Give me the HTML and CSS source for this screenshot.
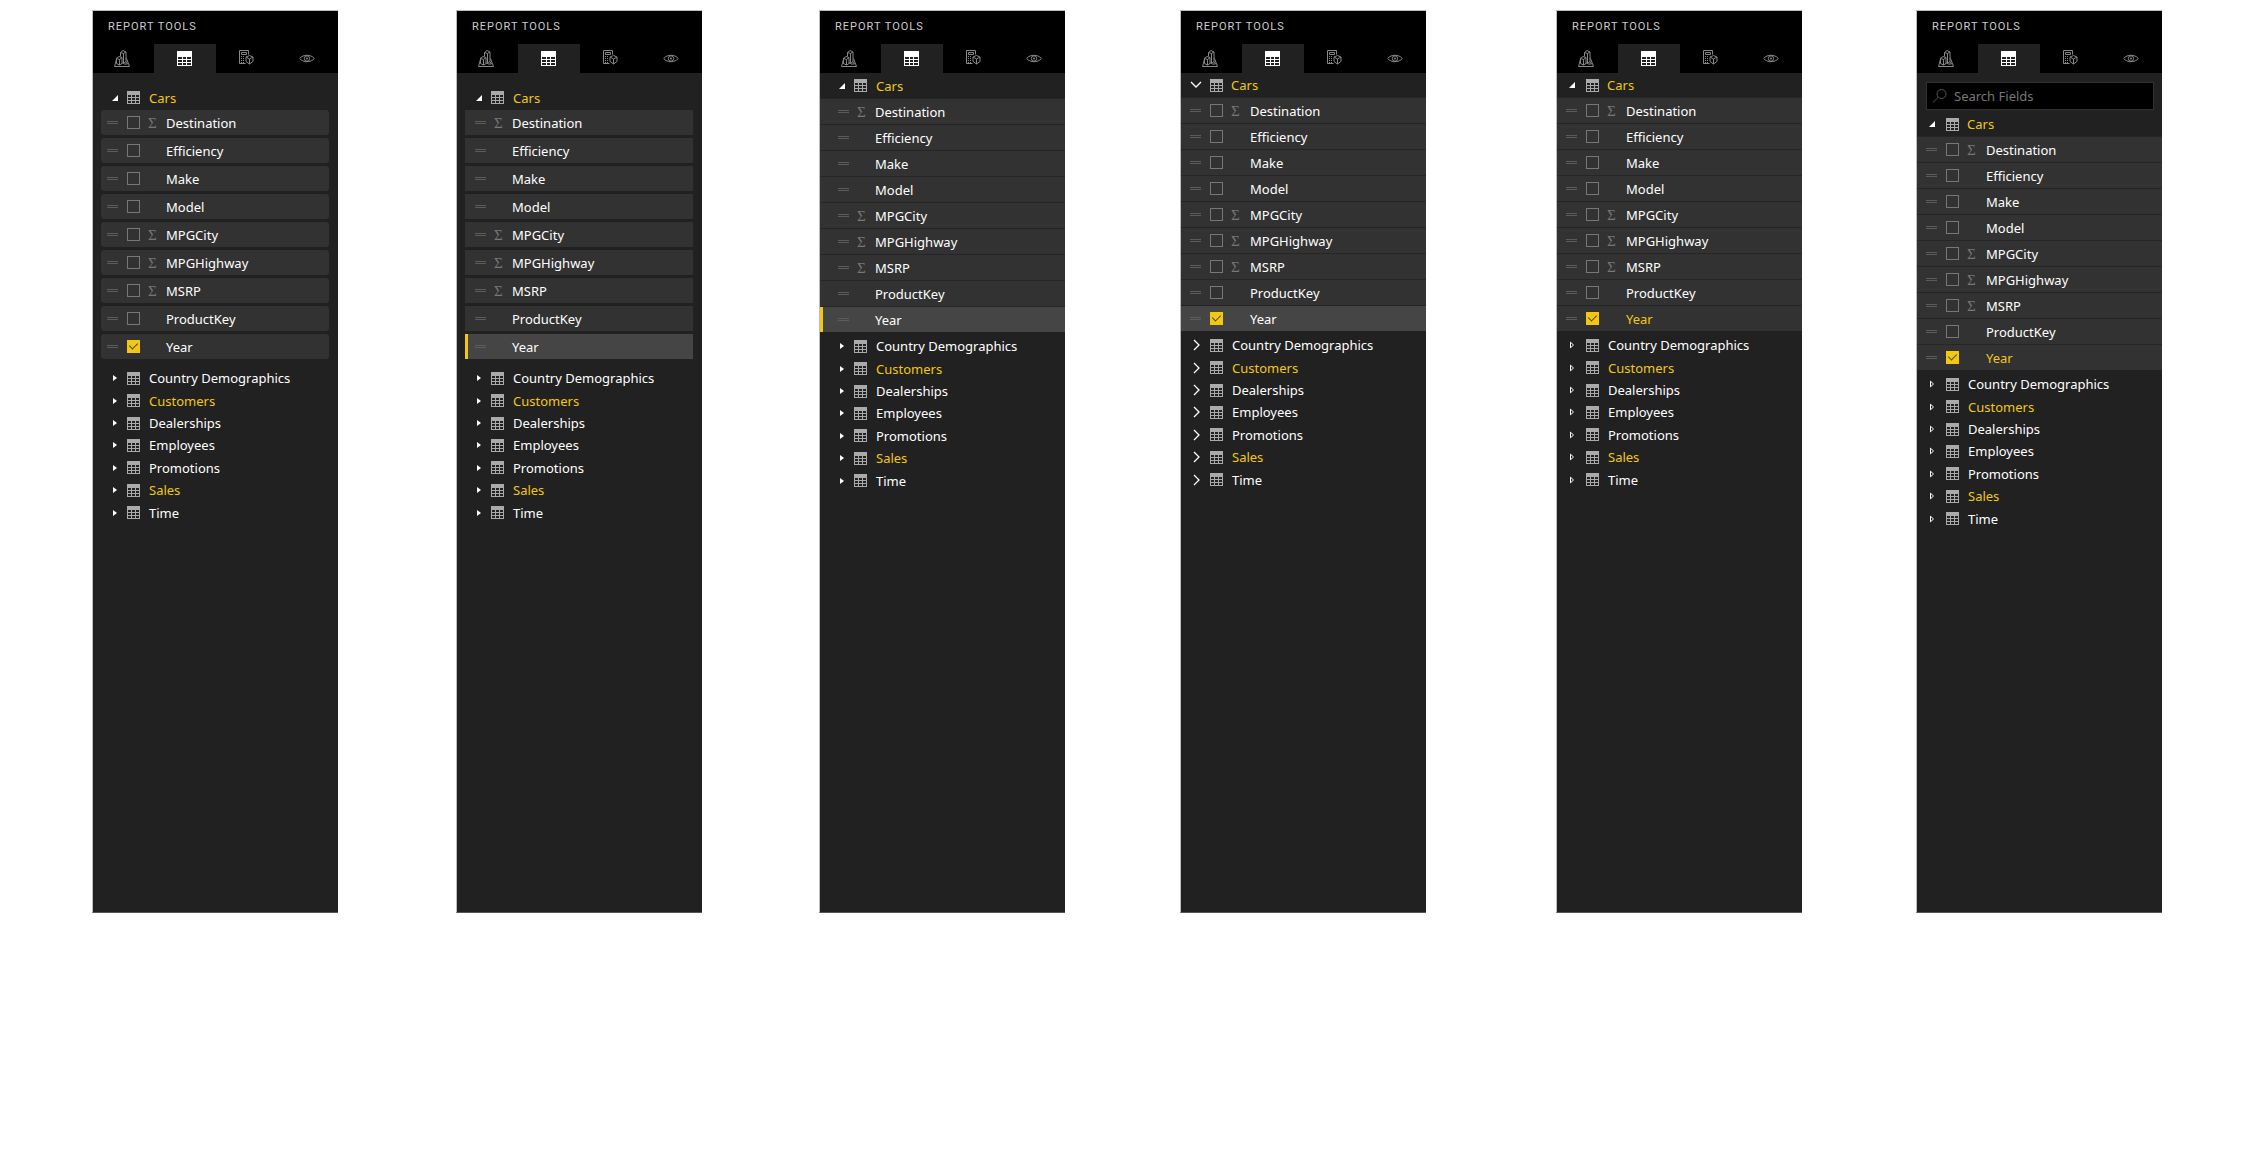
FILE: index.html
```html
<!DOCTYPE html>
<html lang="en">
<head>
<meta charset="utf-8">
<title>Report tools</title>
<link rel="stylesheet" href="styles.css">
</head>
<body>
<svg class="symbols" aria-hidden="true">
  <symbol id="grid" viewBox="0 0 13 13"><path fill="currentColor" fill-rule="evenodd" d="M0 0h13v13H0zM1 4h3v2H1zM5 4h3v2H5zM9 4h3v2H9zM1 7h3v2H1zM5 7h3v2H5zM9 7h3v2H9zM1 10h3v2H1zM5 10h3v2H5zM9 10h3v2H9z"/></symbol>
  <symbol id="fields" viewBox="0 0 15 15"><path fill="currentColor" fill-rule="evenodd" d="M0 0h15v15H0zM1 6h4v2H1zM6 6h3v2H6zM10 6h4v2h-4zM1 9h4v2H1zM6 9h3v2H6zM10 9h4v2h-4zM1 12h4v2H1zM6 12h3v2H6zM10 12h4v2h-4z"/></symbol>
  <symbol id="model" viewBox="0 0 16 17"><path fill="none" stroke="currentColor" d="M3 7.500.5 16.500h15L12.500 8.500M2.500 8.500 5 6.500l3 1v6l-2.500 1.500-3-1.500zM2.500 8.500l3 1 2.500-2M5.500 9.500V15M6.500 6.500V2.500L9 .500l3 1.500v9.500L9.500 13.500 8 13M6.500 2.500l3 1L12 2M9.500 3.500v10M12 11.500l1.500 2.500H10"/></symbol>
  <symbol id="calc" viewBox="0 0 15 15"><path fill="none" stroke="currentColor" d="M6.500 13.500h-6V.500h9v4M2.500 2.500h5v2h-5zM10.500 5.500l3.500 1.500v4.500l-3.500 2.500L7 11.500V7zM7 7l3.500 2L14 7M10.500 9v5"/><path fill="currentColor" d="M2 6h1v1H2zM4 6h1v1H4zM2 8h1v1H2zM4 8h1v1H4zM2 10h1v1H2zM4 10h1v1H4zM2 12h1v1H2zM4 12h1v1H4z"/></symbol>
  <symbol id="eye" viewBox="0 0 16 9"><path fill="none" stroke="currentColor" d="M.700 4.500C4 .200 12 .200 15.300 4.500 12 8.800 4 8.800.700 4.500z"/><circle cx="8" cy="4.500" r="2.700" fill="none" stroke="currentColor"/><circle cx="8" cy="4.500" r="1" fill="currentColor"/></symbol>
  <symbol id="open" viewBox="0 0 6 6"><path fill="currentColor" d="M6 0v6H0z"/></symbol>
  <symbol id="closed" viewBox="0 0 6 6"><path fill="currentColor" d="M1 0l4 3-4 3z"/></symbol>
  <symbol id="hollow" viewBox="0 0 6 8"><path fill="none" stroke="currentColor" d="M1.500 1.200 4.500 4l-3 2.800z"/></symbol>
  <symbol id="down" viewBox="0 0 12 8"><path fill="none" stroke="currentColor" stroke-width="1.300" d="M1 1l5 5 5-5"/></symbol>
  <symbol id="right" viewBox="0 0 8 12"><path fill="none" stroke="currentColor" stroke-width="1.300" d="M2 1l5 5-5 5"/></symbol>
  <symbol id="search" viewBox="0 0 16 16"><circle cx="9.500" cy="6" r="4.500" fill="none" stroke="currentColor"/><path stroke="currentColor" d="M6 9.500.800 14.500"/></symbol>
</svg>
<main class="board">

<section class="panel cards ticks">
  <header class="head"><h2 class="title">REPORT TOOLS</h2>
    <nav class="tabs"><button class="tab" aria-label="Model"><svg class="i-model"><use href="#model"/></svg></button><button class="tab active" aria-label="Fields"><svg class="i-fields"><use href="#fields"/></svg></button><button class="tab" aria-label="Calculations"><svg class="i-calc"><use href="#calc"/></svg></button><button class="tab" aria-label="View"><svg class="i-eye"><use href="#eye"/></svg></button></nav></header>
  <button class="table used top"><svg class="caret"><use href="#open"/></svg><svg class="icon"><use href="#grid"/></svg><span>Cars</span></button>
  <div class="fields">
    <label class="field"><input type="checkbox"><span class="sum">Σ</span><span class="name">Destination</span></label>
    <label class="field"><input type="checkbox"><span class="name">Efficiency</span></label>
    <label class="field"><input type="checkbox"><span class="name">Make</span></label>
    <label class="field"><input type="checkbox"><span class="name">Model</span></label>
    <label class="field"><input type="checkbox"><span class="sum">Σ</span><span class="name">MPGCity</span></label>
    <label class="field"><input type="checkbox"><span class="sum">Σ</span><span class="name">MPGHighway</span></label>
    <label class="field"><input type="checkbox"><span class="sum">Σ</span><span class="name">MSRP</span></label>
    <label class="field"><input type="checkbox"><span class="name">ProductKey</span></label>
    <label class="field"><input type="checkbox" checked><span class="name">Year</span></label>
  </div>
  <div class="tables">
    <button class="table"><svg class="caret"><use href="#closed"/></svg><svg class="icon"><use href="#grid"/></svg><span>Country Demographics</span></button>
    <button class="table used"><svg class="caret"><use href="#closed"/></svg><svg class="icon"><use href="#grid"/></svg><span>Customers</span></button>
    <button class="table"><svg class="caret"><use href="#closed"/></svg><svg class="icon"><use href="#grid"/></svg><span>Dealerships</span></button>
    <button class="table"><svg class="caret"><use href="#closed"/></svg><svg class="icon"><use href="#grid"/></svg><span>Employees</span></button>
    <button class="table"><svg class="caret"><use href="#closed"/></svg><svg class="icon"><use href="#grid"/></svg><span>Promotions</span></button>
    <button class="table used"><svg class="caret"><use href="#closed"/></svg><svg class="icon"><use href="#grid"/></svg><span>Sales</span></button>
    <button class="table"><svg class="caret"><use href="#closed"/></svg><svg class="icon"><use href="#grid"/></svg><span>Time</span></button>
  </div>
</section>

<section class="panel cards square">
  <header class="head"><h2 class="title">REPORT TOOLS</h2>
    <nav class="tabs"><button class="tab" aria-label="Model"><svg class="i-model"><use href="#model"/></svg></button><button class="tab active" aria-label="Fields"><svg class="i-fields"><use href="#fields"/></svg></button><button class="tab" aria-label="Calculations"><svg class="i-calc"><use href="#calc"/></svg></button><button class="tab" aria-label="View"><svg class="i-eye"><use href="#eye"/></svg></button></nav></header>
  <button class="table used top"><svg class="caret"><use href="#open"/></svg><svg class="icon"><use href="#grid"/></svg><span>Cars</span></button>
  <div class="fields">
    <button class="field"><span class="sum">Σ</span><span class="name">Destination</span></button>
    <button class="field"><span class="name">Efficiency</span></button>
    <button class="field"><span class="name">Make</span></button>
    <button class="field"><span class="name">Model</span></button>
    <button class="field"><span class="sum">Σ</span><span class="name">MPGCity</span></button>
    <button class="field"><span class="sum">Σ</span><span class="name">MPGHighway</span></button>
    <button class="field"><span class="sum">Σ</span><span class="name">MSRP</span></button>
    <button class="field"><span class="name">ProductKey</span></button>
    <button class="field lit marked"><span class="name">Year</span></button>
  </div>
  <div class="tables">
    <button class="table"><svg class="caret"><use href="#closed"/></svg><svg class="icon"><use href="#grid"/></svg><span>Country Demographics</span></button>
    <button class="table used"><svg class="caret"><use href="#closed"/></svg><svg class="icon"><use href="#grid"/></svg><span>Customers</span></button>
    <button class="table"><svg class="caret"><use href="#closed"/></svg><svg class="icon"><use href="#grid"/></svg><span>Dealerships</span></button>
    <button class="table"><svg class="caret"><use href="#closed"/></svg><svg class="icon"><use href="#grid"/></svg><span>Employees</span></button>
    <button class="table"><svg class="caret"><use href="#closed"/></svg><svg class="icon"><use href="#grid"/></svg><span>Promotions</span></button>
    <button class="table used"><svg class="caret"><use href="#closed"/></svg><svg class="icon"><use href="#grid"/></svg><span>Sales</span></button>
    <button class="table"><svg class="caret"><use href="#closed"/></svg><svg class="icon"><use href="#grid"/></svg><span>Time</span></button>
  </div>
</section>

<section class="panel">
  <header class="head"><h2 class="title">REPORT TOOLS</h2>
    <nav class="tabs"><button class="tab" aria-label="Model"><svg class="i-model"><use href="#model"/></svg></button><button class="tab active" aria-label="Fields"><svg class="i-fields"><use href="#fields"/></svg></button><button class="tab" aria-label="Calculations"><svg class="i-calc"><use href="#calc"/></svg></button><button class="tab" aria-label="View"><svg class="i-eye"><use href="#eye"/></svg></button></nav></header>
  <button class="table used top"><svg class="caret"><use href="#open"/></svg><svg class="icon"><use href="#grid"/></svg><span>Cars</span></button>
  <div class="fields">
    <button class="field"><span class="sum">Σ</span><span class="name">Destination</span></button>
    <button class="field"><span class="name">Efficiency</span></button>
    <button class="field"><span class="name">Make</span></button>
    <button class="field"><span class="name">Model</span></button>
    <button class="field"><span class="sum">Σ</span><span class="name">MPGCity</span></button>
    <button class="field"><span class="sum">Σ</span><span class="name">MPGHighway</span></button>
    <button class="field"><span class="sum">Σ</span><span class="name">MSRP</span></button>
    <button class="field"><span class="name">ProductKey</span></button>
    <button class="field lit marked"><span class="name">Year</span></button>
  </div>
  <div class="tables">
    <button class="table"><svg class="caret"><use href="#closed"/></svg><svg class="icon"><use href="#grid"/></svg><span>Country Demographics</span></button>
    <button class="table used"><svg class="caret"><use href="#closed"/></svg><svg class="icon"><use href="#grid"/></svg><span>Customers</span></button>
    <button class="table"><svg class="caret"><use href="#closed"/></svg><svg class="icon"><use href="#grid"/></svg><span>Dealerships</span></button>
    <button class="table"><svg class="caret"><use href="#closed"/></svg><svg class="icon"><use href="#grid"/></svg><span>Employees</span></button>
    <button class="table"><svg class="caret"><use href="#closed"/></svg><svg class="icon"><use href="#grid"/></svg><span>Promotions</span></button>
    <button class="table used"><svg class="caret"><use href="#closed"/></svg><svg class="icon"><use href="#grid"/></svg><span>Sales</span></button>
    <button class="table"><svg class="caret"><use href="#closed"/></svg><svg class="icon"><use href="#grid"/></svg><span>Time</span></button>
  </div>
</section>

<section class="panel compact ticks">
  <header class="head"><h2 class="title">REPORT TOOLS</h2>
    <nav class="tabs"><button class="tab" aria-label="Model"><svg class="i-model"><use href="#model"/></svg></button><button class="tab active" aria-label="Fields"><svg class="i-fields"><use href="#fields"/></svg></button><button class="tab" aria-label="Calculations"><svg class="i-calc"><use href="#calc"/></svg></button><button class="tab" aria-label="View"><svg class="i-eye"><use href="#eye"/></svg></button></nav></header>
  <button class="table used top"><svg class="chevron-down"><use href="#down"/></svg><svg class="icon"><use href="#grid"/></svg><span>Cars</span></button>
  <div class="fields">
    <label class="field"><input type="checkbox"><span class="sum">Σ</span><span class="name">Destination</span></label>
    <label class="field"><input type="checkbox"><span class="name">Efficiency</span></label>
    <label class="field"><input type="checkbox"><span class="name">Make</span></label>
    <label class="field"><input type="checkbox"><span class="name">Model</span></label>
    <label class="field"><input type="checkbox"><span class="sum">Σ</span><span class="name">MPGCity</span></label>
    <label class="field"><input type="checkbox"><span class="sum">Σ</span><span class="name">MPGHighway</span></label>
    <label class="field"><input type="checkbox"><span class="sum">Σ</span><span class="name">MSRP</span></label>
    <label class="field"><input type="checkbox"><span class="name">ProductKey</span></label>
    <label class="field lit"><input type="checkbox" checked><span class="name">Year</span></label>
  </div>
  <div class="tables">
    <button class="table"><svg class="chevron"><use href="#right"/></svg><svg class="icon"><use href="#grid"/></svg><span>Country Demographics</span></button>
    <button class="table used"><svg class="chevron"><use href="#right"/></svg><svg class="icon"><use href="#grid"/></svg><span>Customers</span></button>
    <button class="table"><svg class="chevron"><use href="#right"/></svg><svg class="icon"><use href="#grid"/></svg><span>Dealerships</span></button>
    <button class="table"><svg class="chevron"><use href="#right"/></svg><svg class="icon"><use href="#grid"/></svg><span>Employees</span></button>
    <button class="table"><svg class="chevron"><use href="#right"/></svg><svg class="icon"><use href="#grid"/></svg><span>Promotions</span></button>
    <button class="table used"><svg class="chevron"><use href="#right"/></svg><svg class="icon"><use href="#grid"/></svg><span>Sales</span></button>
    <button class="table"><svg class="chevron"><use href="#right"/></svg><svg class="icon"><use href="#grid"/></svg><span>Time</span></button>
  </div>
</section>

<section class="panel compact ticks">
  <header class="head"><h2 class="title">REPORT TOOLS</h2>
    <nav class="tabs"><button class="tab" aria-label="Model"><svg class="i-model"><use href="#model"/></svg></button><button class="tab active" aria-label="Fields"><svg class="i-fields"><use href="#fields"/></svg></button><button class="tab" aria-label="Calculations"><svg class="i-calc"><use href="#calc"/></svg></button><button class="tab" aria-label="View"><svg class="i-eye"><use href="#eye"/></svg></button></nav></header>
  <button class="table used top"><svg class="caret"><use href="#open"/></svg><svg class="icon"><use href="#grid"/></svg><span>Cars</span></button>
  <div class="fields">
    <label class="field"><input type="checkbox"><span class="sum">Σ</span><span class="name">Destination</span></label>
    <label class="field"><input type="checkbox"><span class="name">Efficiency</span></label>
    <label class="field"><input type="checkbox"><span class="name">Make</span></label>
    <label class="field"><input type="checkbox"><span class="name">Model</span></label>
    <label class="field"><input type="checkbox"><span class="sum">Σ</span><span class="name">MPGCity</span></label>
    <label class="field"><input type="checkbox"><span class="sum">Σ</span><span class="name">MPGHighway</span></label>
    <label class="field"><input type="checkbox"><span class="sum">Σ</span><span class="name">MSRP</span></label>
    <label class="field"><input type="checkbox"><span class="name">ProductKey</span></label>
    <label class="field used"><input type="checkbox" checked><span class="name">Year</span></label>
  </div>
  <div class="tables">
    <button class="table"><svg class="hollow"><use href="#hollow"/></svg><svg class="icon"><use href="#grid"/></svg><span>Country Demographics</span></button>
    <button class="table used"><svg class="hollow"><use href="#hollow"/></svg><svg class="icon"><use href="#grid"/></svg><span>Customers</span></button>
    <button class="table"><svg class="hollow"><use href="#hollow"/></svg><svg class="icon"><use href="#grid"/></svg><span>Dealerships</span></button>
    <button class="table"><svg class="hollow"><use href="#hollow"/></svg><svg class="icon"><use href="#grid"/></svg><span>Employees</span></button>
    <button class="table"><svg class="hollow"><use href="#hollow"/></svg><svg class="icon"><use href="#grid"/></svg><span>Promotions</span></button>
    <button class="table used"><svg class="hollow"><use href="#hollow"/></svg><svg class="icon"><use href="#grid"/></svg><span>Sales</span></button>
    <button class="table"><svg class="hollow"><use href="#hollow"/></svg><svg class="icon"><use href="#grid"/></svg><span>Time</span></button>
  </div>
</section>

<section class="panel compact ticks">
  <header class="head"><h2 class="title">REPORT TOOLS</h2>
    <nav class="tabs"><button class="tab" aria-label="Model"><svg class="i-model"><use href="#model"/></svg></button><button class="tab active" aria-label="Fields"><svg class="i-fields"><use href="#fields"/></svg></button><button class="tab" aria-label="Calculations"><svg class="i-calc"><use href="#calc"/></svg></button><button class="tab" aria-label="View"><svg class="i-eye"><use href="#eye"/></svg></button></nav></header>
  <label class="search"><svg class="i-search"><use href="#search"/></svg><input type="text" placeholder="Search Fields" aria-label="Search Fields"></label>
  <button class="table used top"><svg class="caret"><use href="#open"/></svg><svg class="icon"><use href="#grid"/></svg><span>Cars</span></button>
  <div class="fields">
    <label class="field"><input type="checkbox"><span class="sum">Σ</span><span class="name">Destination</span></label>
    <label class="field"><input type="checkbox"><span class="name">Efficiency</span></label>
    <label class="field"><input type="checkbox"><span class="name">Make</span></label>
    <label class="field"><input type="checkbox"><span class="name">Model</span></label>
    <label class="field"><input type="checkbox"><span class="sum">Σ</span><span class="name">MPGCity</span></label>
    <label class="field"><input type="checkbox"><span class="sum">Σ</span><span class="name">MPGHighway</span></label>
    <label class="field"><input type="checkbox"><span class="sum">Σ</span><span class="name">MSRP</span></label>
    <label class="field"><input type="checkbox"><span class="name">ProductKey</span></label>
    <label class="field used"><input type="checkbox" checked><span class="name">Year</span></label>
  </div>
  <div class="tables">
    <button class="table"><svg class="hollow"><use href="#hollow"/></svg><svg class="icon"><use href="#grid"/></svg><span>Country Demographics</span></button>
    <button class="table used"><svg class="hollow"><use href="#hollow"/></svg><svg class="icon"><use href="#grid"/></svg><span>Customers</span></button>
    <button class="table"><svg class="hollow"><use href="#hollow"/></svg><svg class="icon"><use href="#grid"/></svg><span>Dealerships</span></button>
    <button class="table"><svg class="hollow"><use href="#hollow"/></svg><svg class="icon"><use href="#grid"/></svg><span>Employees</span></button>
    <button class="table"><svg class="hollow"><use href="#hollow"/></svg><svg class="icon"><use href="#grid"/></svg><span>Promotions</span></button>
    <button class="table used"><svg class="hollow"><use href="#hollow"/></svg><svg class="icon"><use href="#grid"/></svg><span>Sales</span></button>
    <button class="table"><svg class="hollow"><use href="#hollow"/></svg><svg class="icon"><use href="#grid"/></svg><span>Time</span></button>
  </div>
</section>

</main>
</body>
</html>
```
FILE: styles.css
```css
*, *::before, *::after { box-sizing: border-box; }

body {
  margin: 0;
  background: #fff;
  color: #fff;
  font: 13px/20px "Noto Sans", "Open Sans", sans-serif;
}

button, input { font: inherit; color: inherit; }
button { border: 0; padding: 0; background: none; text-align: left; }
svg { display: block; }
.symbols { display: none; }

/* Fixed-width panels; the space between them follows the window */
.board {
  display: grid;
  grid-template-columns: 92fr 246px 118fr 246px 117fr 246px 115fr 246px 130fr 246px 114fr 246px 100fr;
  padding-top: 10px;
}
.panel:nth-child(1) { grid-column: 2; }
.panel:nth-child(2) { grid-column: 4; }
.panel:nth-child(3) { grid-column: 6; }
.panel:nth-child(4) { grid-column: 8; }
.panel:nth-child(5) { grid-column: 10; }
.panel:nth-child(6) { grid-column: 12; }

.panel {
  --caret: 34px;
  --gap: 9px;
  --indent: 18px;
  --grip: 19px;
  --sum: 18px;
  min-height: calc(100vh - 249px);
  background: #212121;
  border: 1px solid #b9bdbc;
  border-right: 0;
  border-bottom-color: #555;
}

.head { background: #000; }
.title {
  margin: 0;
  padding: 6px 0 7px 15px;
  color: #ccc;
  font: 11px/20px Roboto, sans-serif;
  letter-spacing: 1px;
}
.tabs { display: grid; grid-template-columns: repeat(4, 1fr); height: 29px; }
.tab { display: grid; place-items: center; color: #888; }
.tab.active { background: #212121; color: #fff; }
.i-model { width: 16px; height: 17px; margin-right: 4px; }
.i-fields { width: 15px; height: 15px; }
.i-calc { width: 15px; height: 15px; margin-bottom: 3px; }
.i-eye { width: 16px; height: 9px; }

.table {
  display: grid;
  grid-template-columns: var(--caret) 13px 1fr;
  align-items: center;
  width: 100%;
}
.table span { padding-left: var(--gap); }
.top { height: 25px; }
.icon { width: 13px; height: 13px; color: #aaa; }
.caret { width: 6px; height: 6px; margin-left: 19px; }
.used { color: #f2c811; }
.caret, .chevron, .chevron-down, .hollow { color: #fff; }
.tables { display: grid; grid-auto-rows: 1fr; height: 157px; margin-top: 3px; }

.field {
  display: flex;
  align-items: center;
  width: 100%;
  height: 26px;
  padding-left: var(--indent);
  background: #323232;
  border-top: 1px solid #262626;
}
/* Drag handle */
.field::before {
  content: "";
  width: 11px;
  height: 3px;
  margin-right: calc(var(--grip) - 11px);
  border: solid #5c5c5c;
  border-width: 1px 0;
}
.field input {
  appearance: none;
  display: grid;
  place-items: center;
  width: 13px;
  height: 13px;
  margin: 0 8px 0 0;
  border: 1px solid #777;
}
.field input:checked { background: #f2c811; border-color: #f2c811; }
.field input:checked::after {
  content: "";
  width: 5px;
  height: 8px;
  margin-bottom: 3px;
  border: solid #4d4210;
  border-width: 0 1px 1px 0;
  transform: rotate(45deg);
}
.sum {
  width: var(--sum);
  color: #777;
  font: 15px/20px "Liberation Serif", serif;
}
.field > .name:first-child, input + .name { padding-left: var(--sum); }
.lit { background: #454545; }
.marked { box-shadow: inset 3px 0 #f2c811; }

.cards .top { margin-top: 12px; }
.cards .fields { display: grid; gap: 3px; margin: 0 9px 0 8px; }
.cards .field { height: 25px; border: 0; border-radius: 3px; }
.cards .tables { margin-top: 8px; }
.cards.ticks { --indent: 6px; --grip: 20px; }
.cards.square { --indent: 10px; }
.cards.square .field { border-radius: 0; }

.compact { --caret: 29px; --gap: 9px; --indent: 9px; --grip: 20px; --sum: 19px; }
.compact .top { --gap: 8px; height: 24px; }
.compact .caret { margin-left: 12px; }
.hollow { width: 6px; height: 8px; margin-left: 12px; }
.chevron { width: 8px; height: 12px; margin-left: 11px; }
.chevron-down { width: 12px; height: 8px; margin-left: 9px; }

.search {
  display: flex;
  align-items: center;
  height: 28px;
  margin: 9px 8px 2px 9px;
  padding-left: 5px;
  background: #000;
  border: 1px solid #333;
}
.i-search { width: 16px; height: 16px; color: #555; }
.search input {
  flex: 1;
  min-width: 0;
  height: 20px;
  padding: 0 0 0 6px;
  background: none;
  border: 0;
}
.search input::placeholder { color: #777; opacity: 1; }
```
